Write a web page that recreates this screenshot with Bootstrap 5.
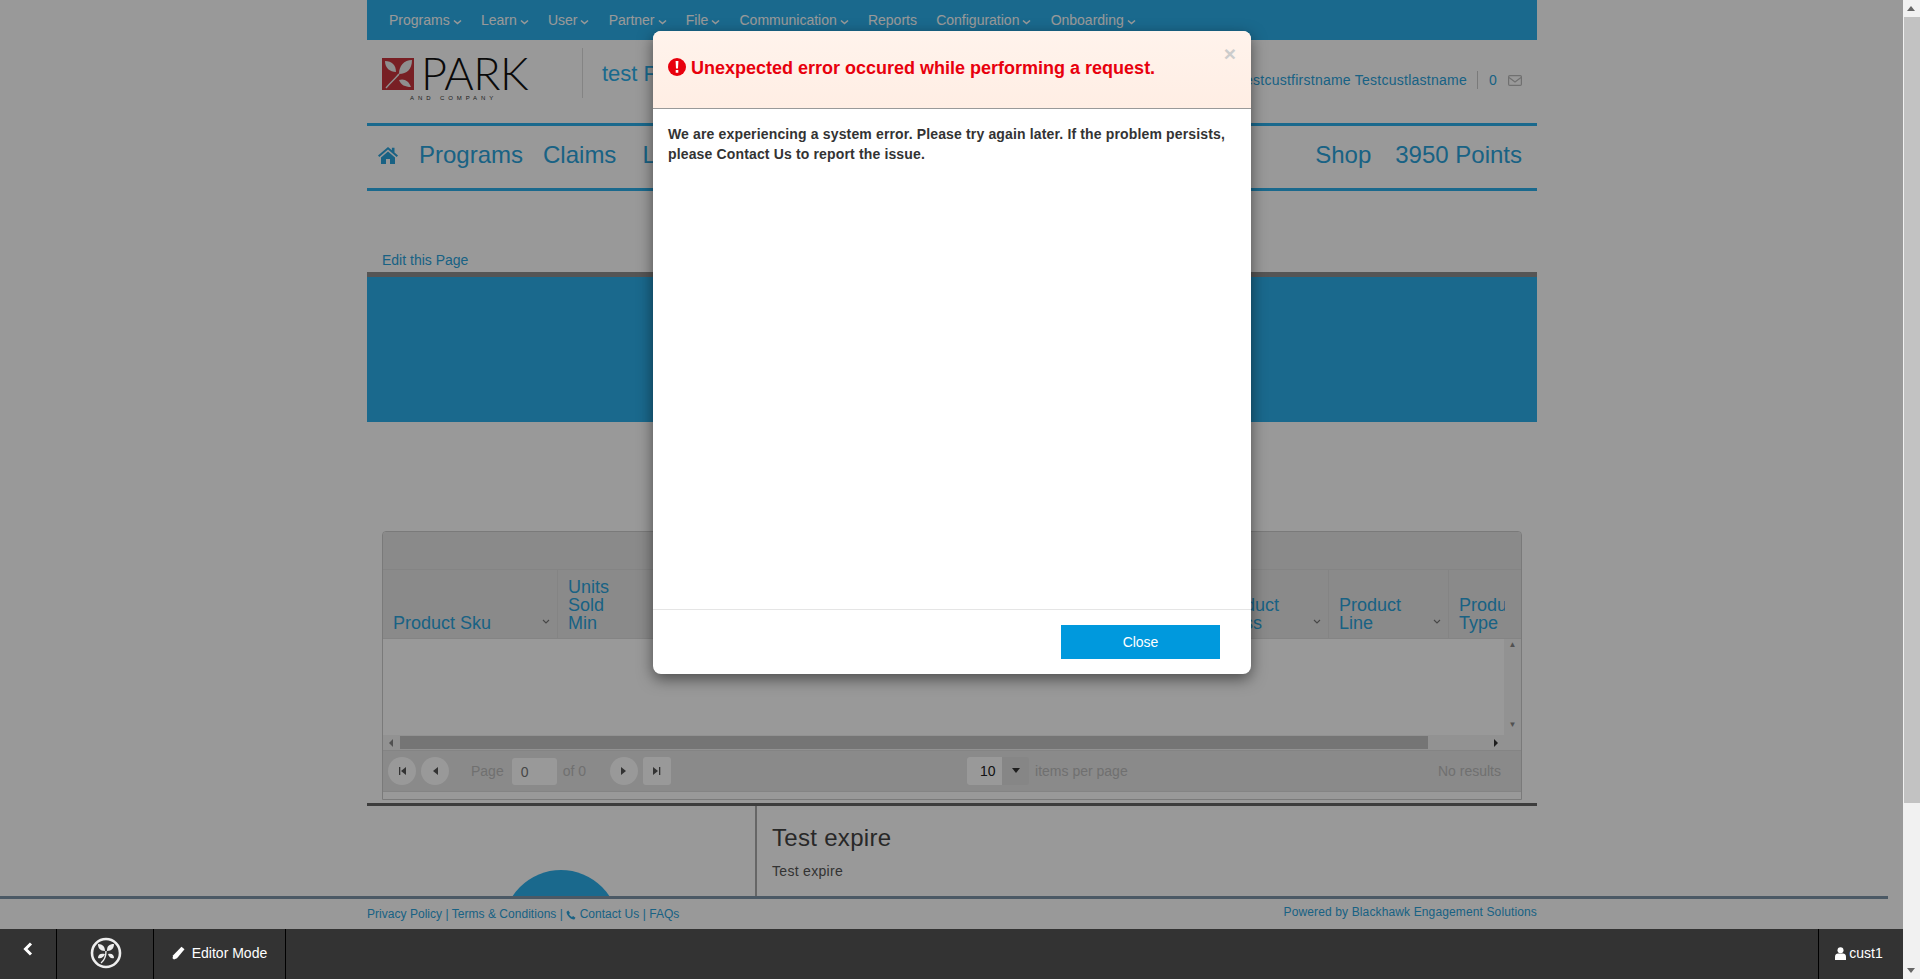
<!DOCTYPE html>
<html lang="en">
<head>
<meta charset="utf-8">
<title>Park and Company</title>
<link href="https://cdn.jsdelivr.net/npm/bootstrap@5.3.0/dist/css/bootstrap.min.css" rel="stylesheet">
<style>
html,body{height:100%;margin:0}
body{font-family:"Liberation Sans",Arial,sans-serif;font-size:14px;color:#333;background:#fff;overflow:hidden}
a{text-decoration:none;color:inherit}
.view{width:1903px;height:979px;overflow:hidden;flex:none}
.wrap{width:1170px;margin-left:367px}
.topbar{height:40px;background:#2cb0ec;color:#fff;padding-left:22px;gap:19.2px}
.topbar a{line-height:40px}
.chev{width:9px;height:6px;margin-left:3px;vertical-align:0}
.head{height:83px;position:relative}
.logo-box{width:216px;height:50px;margin-top:8px;border-right:1px solid #ddd;margin-right:19px;position:relative}
.logo-mark{width:32px;height:32px;position:absolute;left:15px;top:10px}
.logo-word{position:absolute;left:54px;top:-1px;font-family:Lato,"Liberation Sans",sans-serif;font-weight:300;font-size:45px;line-height:52px;color:#111;letter-spacing:-.5px}
.logo-sub{position:absolute;left:43px;top:46px;font-size:6px;letter-spacing:3.9px;color:#333;line-height:8px;white-space:nowrap}
.sitename{font-size:22px;line-height:26px;margin-top:21px;color:#2cb0ec}
.userbox{position:absolute;right:15px;top:31px;color:#2aa3dc;line-height:18px;font-size:14px;letter-spacing:.25px}
.userbox .sep{border-left:1px solid #ccc;height:18px;margin:0 11px 0 10px}
.mailicon{margin-left:11px}
.mainnav{height:68px;border-top:3px solid #2cb0ec;border-bottom:3px solid #2cb0ec;padding:0 15px 5px 11px;font-size:24px;color:#2aa3dc;line-height:50px}
.mainnav a{margin-right:20px}
.mainnav .last{margin-right:0}
.mainnav .homeicon{margin-right:21px}
.mainnav .claimslink{margin-right:26px}
.mainnav .shoplink{margin-left:auto;margin-right:24px}
.editline{height:81px;padding:59px 15px 0;line-height:20px;color:#2aa3dc}
.banner{height:150px;background:#2cb0ec;border-top:5px solid #8e8e8e}
.gridwrap{margin:109px 15px 0;height:269px;border:1px solid #ccc;border-radius:4px 4px 0 0;overflow:hidden;background:#fff}
.grouphead{height:37px;background:#e6e6e6}
.colheads{height:70px;background:#e6e6e6;border-top:1px solid #ddd;border-bottom:1px solid #ddd;overflow:hidden;font-size:18px;line-height:18px;color:#2aa3dc}
.colcell{flex:none;padding:0 10px 6px;position:relative;height:100%;display:flex;align-items:flex-end;border-right:1px solid #ddd}
.c1{width:175px}.c2{width:120px}.c3{width:529px}.c4{width:122px}.c5{width:120px}.c6{width:56px;border-right:0;overflow:hidden}
.sortchev{position:absolute;right:7px;bottom:13px;width:8px;height:6px}
.gridbody{height:96px;position:relative}
.vtrack{position:absolute;right:0;top:0;bottom:0;width:17px;background:#f4f4f4;font-size:8px;color:#888;text-align:center;line-height:12px}
.vtrack-dn{margin-top:68px}
.hbar{height:15px;background:#f4f4f4;padding:1px 17px 1px 17px;position:relative}
.hthumb{height:13px;background:#c4c4c4;width:1028px}
.hbar i{position:absolute;top:4px;width:0;height:0;border-top:4px solid transparent;border-bottom:4px solid transparent}
.hl{left:6px;border-right:4px solid #888}.hr{right:23px;border-left:4px solid #333}
.pager{height:42px;background:#e6e6e6;border-top:1px solid #ddd;border-bottom:1px solid #ddd;color:#bbb;padding:0 20px 0 5px}
.pbtn{width:28px;height:28px;border-radius:50%;background:#fff;display:flex;align-items:center;justify-content:center;margin-right:5px;flex:none}
.pbtn svg{width:10px;height:10px}
.pbtn.sq{border-radius:3px;margin:0 0 0 5px}
.pbtn.nextbtn{margin:0 0 0 24px}
.pagelabel{margin-left:17px}
.pinput{width:45px;height:27px;background:#fff;border-radius:3px;color:#777;font-size:14px;line-height:29px;padding-left:9px;margin:0 6px 0 8px}
.psize{margin-left:296px}
.pselect{width:62px;height:28px;background:#e0e0e0;border-radius:3px;overflow:hidden;color:#222;margin-right:6px}
.pselect b{font-weight:400;display:block;width:35px;height:100%;background:#fff;padding-left:13px;line-height:29px}
.pselect i{width:0;height:0;border-left:4px solid transparent;border-right:4px solid transparent;border-top:5px solid #333;margin:11px 0 0 10px}
.lower{border-top:3px solid #666;height:94px;margin-top:3px}
.lowerleft{width:390px;border-right:2px solid #aaa;position:relative;overflow:hidden}
.disc{position:absolute;left:136px;top:64px;width:116px;height:116px;border-radius:50%;background:#2cb0ec}
.lowerright{padding:18px 15px;color:#555;letter-spacing:.3px}
.lowerright h3{font-size:24px;font-weight:400;line-height:28px;margin:0 0 9px;color:#444;letter-spacing:.3px}
.bottomstack{position:absolute;left:0;right:0;bottom:0}
.legal{height:33px;background:#fff;position:relative;font-size:12px;color:#2aa3dc}
.legal::before{content:"";position:absolute;left:0;top:0;width:1888px;height:3px;background:#7d95a8}
.legal .wrap{padding-top:11px;line-height:15px;letter-spacing:.03px}
.legal svg{width:10px;height:10px}
.poweredby{margin-top:-2px;letter-spacing:.13px}
.dock{height:50px;background:#333;color:#fff;position:relative;z-index:1060}
.dockcell{height:100%;border-right:1px solid #000;display:flex;align-items:center;justify-content:center;padding-bottom:2px}
.dock-back{width:57px;padding-bottom:10px}.dock-logo{width:97px;padding-left:2px}.dock-edit{width:132px;gap:7px}
.dock-user{margin-left:auto;border-right:0;border-left:1px solid #000;width:85px;gap:3px;padding-right:4px}
.veil{position:absolute;left:0;top:0;width:100%;height:100%;background:rgba(0,0,0,.4);z-index:1040}
.errbox{position:absolute;left:653px;top:31px;width:598px;z-index:1050}
.errbox .modal-content{height:643px;background:#fff;border:0;border-radius:8px;box-shadow:0 5px 15px rgba(0,0,0,.5)}
.errbox .modal-header{height:78px;padding:0 15px;align-items:flex-start;background:linear-gradient(#fff3ec,#ffeee4);border-bottom:1px solid #999;border-radius:8px 8px 0 0;position:relative}
.errtitle{font-size:18px;font-weight:700;color:#e8000d;margin:26px 0 0;line-height:22px;display:flex;align-items:center;gap:5px}
.errtitle svg{width:18px;height:18px;margin-top:-3px}
.xbtn{position:absolute;right:15px;top:11px;font-size:21px;font-weight:700;color:#ccc;line-height:24px}
.errbox .modal-body{height:500px;flex:none;padding:15px;font-weight:700;font-size:14px;letter-spacing:.15px;line-height:20px;color:#333}
.errbox .modal-footer{height:65px;padding:0;border-top:1px solid #e5e5e5;display:block;position:relative}
.closebtn{position:absolute;left:408px;top:15px;width:159px;height:34px;background:#0099dd;color:#fff;border:0;border-radius:0;font-size:14px;padding:0;letter-spacing:-.1px}
.closebtn:hover{background:#0099dd;color:#fff}
.vscroll{width:17px;height:979px;background:#f1f1f1;flex:none;position:relative}
.vthumb{position:absolute;left:1px;right:0;top:17px;height:786px;background:#c2c2c2}
.ua{position:absolute;left:4px;width:0;height:0;border-left:4px solid transparent;border-right:4px solid transparent}
.ua.up{top:6px;border-bottom:5px solid #666}.ua.dn{bottom:6px;border-top:5px solid #666}
</style>
</head>
<body class="d-flex">
<div class="view position-relative">
  <div class="wrap">
    <div class="topbar d-flex">
      <a href="#">Programs<svg class="chev" viewBox="0 0 9 6"><path d="M1 1.500l3.500 3 3.500-3" fill="none" stroke="#fff" stroke-width="1.600"/></svg></a>
      <a href="#">Learn<svg class="chev" viewBox="0 0 9 6"><path d="M1 1.500l3.500 3 3.500-3" fill="none" stroke="#fff" stroke-width="1.600"/></svg></a>
      <a href="#">User<svg class="chev" viewBox="0 0 9 6"><path d="M1 1.500l3.500 3 3.500-3" fill="none" stroke="#fff" stroke-width="1.600"/></svg></a>
      <a href="#">Partner<svg class="chev" viewBox="0 0 9 6"><path d="M1 1.500l3.500 3 3.500-3" fill="none" stroke="#fff" stroke-width="1.600"/></svg></a>
      <a href="#">File<svg class="chev" viewBox="0 0 9 6"><path d="M1 1.500l3.500 3 3.500-3" fill="none" stroke="#fff" stroke-width="1.600"/></svg></a>
      <a href="#">Communication<svg class="chev" viewBox="0 0 9 6"><path d="M1 1.500l3.500 3 3.500-3" fill="none" stroke="#fff" stroke-width="1.600"/></svg></a>
      <a href="#">Reports</a>
      <a href="#">Configuration<svg class="chev" viewBox="0 0 9 6"><path d="M1 1.500l3.500 3 3.500-3" fill="none" stroke="#fff" stroke-width="1.600"/></svg></a>
      <a href="#">Onboarding<svg class="chev" viewBox="0 0 9 6"><path d="M1 1.500l3.500 3 3.500-3" fill="none" stroke="#fff" stroke-width="1.600"/></svg></a>
    </div>
    <div class="head d-flex">
      <div class="logo-box">
        <svg class="logo-mark" viewBox="0 0 32 32"><rect width="32" height="32" fill="#c8343c"/><path d="M3 3c7 0 11 4 11 11-6 0-11-4-11-11zM30 2c0 9-5 14-13 14 0-8 5-14 13-14zM29 29c-6 0-10-2-12-7 5-2 10 1 12 7z" fill="#eee"/><path d="M4 30C9 24 14 20 17 16" stroke="#eee" stroke-width="1.400" fill="none"/></svg>
        <span class="logo-word">PARK</span>
        <span class="logo-sub">AND COMPANY</span>
      </div>
      <div class="sitename">test Program</div>
      <div class="userbox d-flex align-items-center">
        <span>Testcustfirstname Testcustlastname</span><span class="sep"></span><span>0</span>
        <svg class="mailicon" width="14" height="11" viewBox="0 0 14 11"><rect x=".6" y=".6" width="12.800" height="9.800" rx="1.200" fill="none" stroke="#bbb" stroke-width="1.200"/><path d="M1 2.500l6 4.500 6-4.500" fill="none" stroke="#bbb" stroke-width="1.200"/></svg>
      </div>
    </div>
    <div class="mainnav d-flex align-items-center">
      <a href="#" class="homeicon d-flex"><svg width="20" height="18" viewBox="0 0 20 18"><path d="M10 1L0 9.500l1.300 1.500L10 3.600l8.700 7.400L20 9.500 16.500 6.500V1.800h-2.600v2.500zM3 11.400V18h5v-5h4v5h5v-6.600L10 5.400z" fill="#2aa3dc"/></svg></a>
      <a href="#">Programs</a><a href="#" class="claimslink">Claims</a><a href="#">Learn</a>
      <a href="#" class="shoplink">Shop</a><a href="#" class="last">3950 Points</a>
    </div>
    <div class="editline"><a href="#">Edit this Page</a></div>
    <div class="banner"></div>
    <div class="gridwrap">
      <div class="grouphead"></div>
      <div class="colheads d-flex">
        <div class="colcell c1">Product Sku<svg class="sortchev" viewBox="0 0 8 6"><path d="M1 1l3 3 3-3" fill="none" stroke="#777" stroke-width="1.100"/></svg></div>
        <div class="colcell c2"><span>Units<br>Sold<br>Min</span></div>
        <div class="colcell c3"></div>
        <div class="colcell c4"><span>Product<br>Class</span><svg class="sortchev" viewBox="0 0 8 6"><path d="M1 1l3 3 3-3" fill="none" stroke="#777" stroke-width="1.100"/></svg></div>
        <div class="colcell c5"><span>Product<br>Line</span><svg class="sortchev" viewBox="0 0 8 6"><path d="M1 1l3 3 3-3" fill="none" stroke="#777" stroke-width="1.100"/></svg></div>
        <div class="colcell c6"><span>Product<br>Type</span></div>
      </div>
      <div class="gridbody"><div class="vtrack"><div>▲</div><div class="vtrack-dn">▼</div></div></div>
      <div class="hbar"><i class="hl"></i><div class="hthumb"></div><i class="hr"></i></div>
      <div class="pager d-flex align-items-center">
        <span class="pbtn"><svg viewBox="0 0 10 10"><path d="M2 1h1.300v8H2zM9 1v8L4 5z" fill="#555"/></svg></span>
        <span class="pbtn"><svg viewBox="0 0 10 10"><path d="M8 1v8L3 5z" fill="#555"/></svg></span>
        <span class="pagelabel">Page</span><span class="pinput">0</span><span>of 0</span>
        <span class="pbtn nextbtn"><svg viewBox="0 0 10 10"><path d="M2 1v8l5-4z" fill="#555"/></svg></span>
        <span class="pbtn sq"><svg viewBox="0 0 10 10"><path d="M1 1v8l5-4zM7 1h1.300v8H7z" fill="#555"/></svg></span>
        <div class="psize d-flex align-items-center">
          <span class="pselect d-flex"><b>10</b><i></i></span><span>items per page</span>
        </div>
        <span class="ms-auto">No results</span>
      </div>
    </div>
    <div class="lower d-flex">
      <div class="lowerleft"><div class="disc"></div></div>
      <div class="lowerright"><h3>Test expire</h3><div>Test expire</div></div>
    </div>
  </div>

  <div class="bottomstack">
    <div class="legal">
      <div class="wrap d-flex justify-content-between">
        <span><a href="#">Privacy Policy</a> | <a href="#">Terms &amp; Conditions</a> | <svg viewBox="0 0 10 10"><path d="M2.300.5L.6 1.700C.2 4.800 4.800 9.800 8.300 9.500L9.500 7.700 7.100 6 6 7C4.800 6.500 3.500 5.200 3 4L4 2.900z" fill="#2aa3dc"/></svg> <a href="#">Contact Us</a> | <a href="#">FAQs</a></span>
        <a href="#" class="poweredby">Powered by Blackhawk Engagement Solutions</a>
      </div>
    </div>
    <div class="dock d-flex">
      <a href="#" class="dockcell dock-back"><svg width="10" height="14" viewBox="0 0 10 14"><path d="M8 1.500L2.500 7 8 12.500" fill="none" stroke="#fff" stroke-width="3"/></svg></a>
      <a href="#" class="dockcell dock-logo"><svg width="32" height="32" viewBox="0 0 32 32"><circle cx="16" cy="16" r="14" fill="none" stroke="#eee" stroke-width="2.600"/><path d="M15 14C10 14 8 11 8 7c5 0 7 3 7 7zM17 14c0-5 2-7 7-7 0 4-2 7-7 7zM15 17c-1 3-4 5-7 4 0-4 3-5 7-4zM18 17c4-1 6 1 6 4-3 1-5-1-6-4z" fill="#eee"/><path d="M16 14c0 5-1 9-5 12" fill="none" stroke="#eee" stroke-width="1.400"/></svg></a>
      <a href="#" class="dockcell dock-edit"><svg width="13" height="14" viewBox="0 0 13 14"><path d="M9.500.7l3 2.500L5 12.300l-3 1.200-1.500-1.300.7-3z" fill="#fff"/></svg>Editor Mode</a>
      <a href="#" class="dockcell dock-user"><svg width="11" height="13" viewBox="0 0 11 13"><circle cx="5.500" cy="3.300" r="3" fill="#fff"/><path d="M0 13V9.500C0 7.500 1.500 6.500 3 6.500h5c1.500 0 3 1 3 3V13z" fill="#fff"/></svg>cust1</a>
    </div>
  </div>

  <div class="veil"></div>
  <div class="errbox">
    <div class="modal-content">
      <div class="modal-header">
        <h4 class="errtitle"><svg viewBox="0 0 18 18"><circle cx="9" cy="9" r="9" fill="#e8000d"/><path d="M7.600 3h2.800l-.4 7.500H8zM7.700 12h2.600v2.700H7.700z" fill="#fff"/></svg>Unexpected error occured while performing a request.</h4>
        <span class="xbtn">×</span>
      </div>
      <div class="modal-body">We are experiencing a system error. Please try again later. If the problem persists, please Contact Us to report the issue.</div>
      <div class="modal-footer"><button type="button" class="btn closebtn">Close</button></div>
    </div>
  </div>
</div>
<div class="vscroll"><span class="ua up"></span><div class="vthumb"></div><span class="ua dn"></span></div>
<script src="https://cdn.jsdelivr.net/npm/bootstrap@5.3.0/dist/js/bootstrap.bundle.min.js"></script>
</body>
</html>
